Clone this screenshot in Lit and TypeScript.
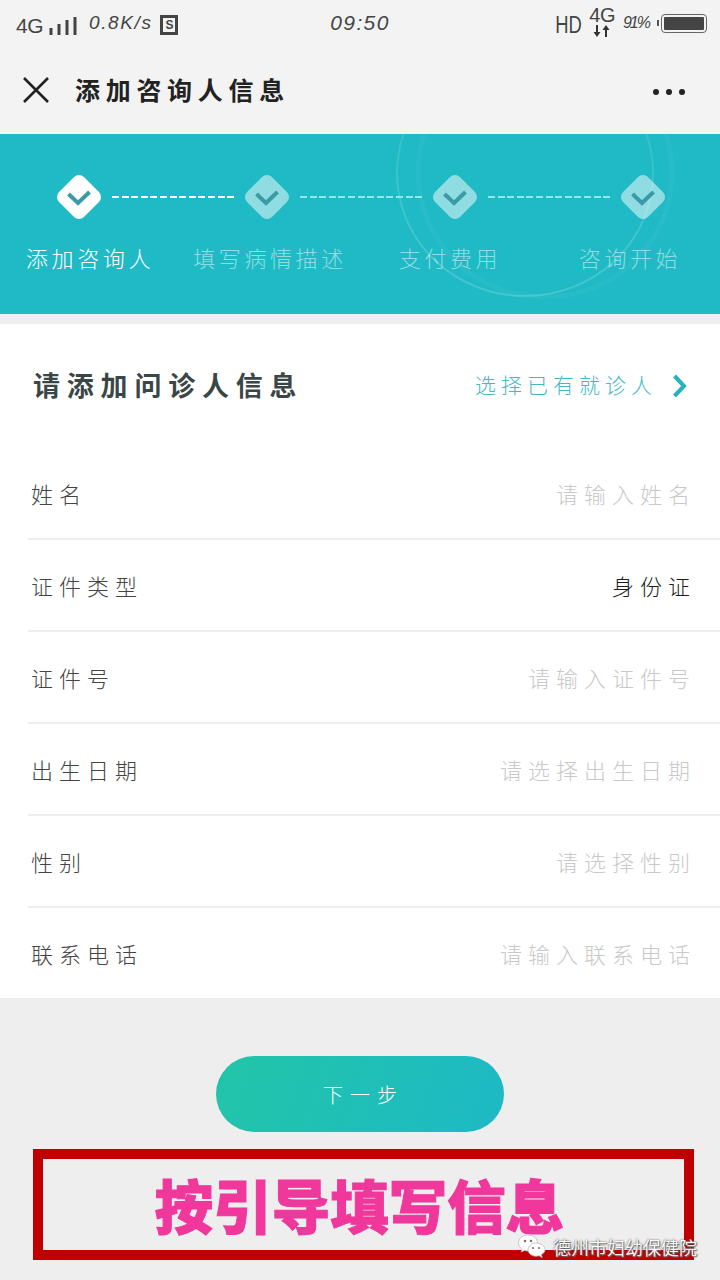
// app.ts
// Add-consultee form screen: status bar, step banner, form rows and the next button

import { LitElement, html, css, svg } from 'lit';
import { customElement } from 'lit/decorators.js';

const STEPS = ['添加咨询人', '填写病情描述', '支付费用', '咨询开始'];

const ROWS = [
  { label: '姓名', value: '请输入姓名', filled: false },
  { label: '证件类型', value: '身份证', filled: true },
  { label: '证件号', value: '请输入证件号', filled: false },
  { label: '出生日期', value: '请选择出生日期', filled: false },
  { label: '性别', value: '请选择性别', filled: false },
  { label: '联系电话', value: '请输入联系电话', filled: false },
];

const diamond = (active: boolean) => svg`
  <svg class="diamond" width="44" height="44" viewBox="0 0 44 44">
    <path
      d="M22 7L37 22L22 37L7 22Z"
      fill="#ffffff"
      stroke="#ffffff"
      stroke-width="14"
      stroke-linejoin="round"
      opacity=${active ? 1 : 0.5}
    ></path>
    <path d="M11.5 19L21 28L32.5 17" fill="none" stroke="#3a9ba6" stroke-width="4"></path>
  </svg>
`;

@customElement('app-root')
export class AppRoot extends LitElement {
  static styles = css`
    :host {
      display: block;
      width: 720px;
      height: 1280px;
      overflow: hidden;
      position: relative;
      background: #eeeeef;
      font-family: 'Noto Sans CJK SC', 'Noto Sans', sans-serif;
    }

    .top {
      height: 134px;
      background: #f3f3f3;
    }

    /* status bar */
    .status {
      height: 46px;
      display: grid;
      grid-template-columns: 1fr auto 1fr;
      align-items: center;
      color: #444;
      font-family: 'Liberation Sans', sans-serif;
    }

    .status-left,
    .status-right {
      display: flex;
      align-items: center;
    }

    .status-left {
      padding-left: 16px;
    }

    .status-right {
      justify-content: flex-end;
      padding-right: 13px;
    }

    .net {
      font-size: 21px;
      margin-top: 6px;
      letter-spacing: -0.5px;
    }

    .speed {
      font-size: 19px;
      font-style: italic;
      letter-spacing: 1.6px;
      margin: 0 8px 0 12px;
    }

    .sim {
      width: 18px;
      height: 20px;
      box-sizing: border-box;
      border: 3px solid #444;
      font-size: 12px;
      line-height: 15px;
      text-align: center;
      font-weight: 700;
      margin-top: 3px;
    }

    .time {
      font-size: 21px;
      font-style: italic;
      letter-spacing: 1.4px;
    }

    .hd {
      font-size: 23px;
      line-height: 26px;
      margin: 3px -3px 0 -3px;
      transform: scaleX(0.8);
    }

    .net-stack {
      display: flex;
      flex-direction: column;
      align-items: center;
      margin: -3px 8px 0 7px;
      font-size: 20px;
      line-height: 17px;
      letter-spacing: -0.5px;
    }

    .net-stack svg {
      display: block;
      margin-top: 1px;
    }

    .pct {
      font-size: 16px;
      font-style: italic;
      letter-spacing: -2px;
      margin-right: 8px;
      margin-bottom: 1px;
    }

    .nub {
      width: 2px;
      height: 6px;
      margin-right: 2px;
      background: #555;
    }

    .battery {
      width: 46px;
      height: 19px;
      box-sizing: border-box;
      border: 1.5px solid #666;
      border-radius: 4px;
      padding: 2px;
      margin-top: 1px;
    }

    .battery div {
      height: 100%;
      background: #444;
      border-radius: 1px;
    }

    /* nav bar */
    .nav {
      height: 88px;
      display: flex;
      align-items: center;
      padding: 0 35px 0 23px;
      color: #222;
    }

    .nav-title {
      flex: 1;
      margin: 0 0 3px 26px;
      font-size: 25px;
      font-weight: 700;
      letter-spacing: 5.7px;
    }

    .dots {
      display: flex;
      gap: 7px;
      margin-top: 3px;
    }

    .dots i {
      width: 6px;
      height: 6px;
      border-radius: 50%;
      background: #222;
    }

    /* step banner */
    .banner {
      height: 180px;
      position: relative;
      overflow: hidden;
      background: #1fbac5;
    }

    .rings {
      position: absolute;
      left: 0;
      top: 0;
    }

    .track {
      position: relative;
      display: flex;
      align-items: center;
      padding: 41px 0 0 57px;
    }

    .diamond {
      display: block;
      flex: none;
    }

    .dash {
      width: 123px;
      height: 2px;
      margin: 0 10px 0 11px;
      background: repeating-linear-gradient(90deg, #8ce9ee 0 7px, transparent 7px 9.6px);
    }

    .dash.first {
      background: repeating-linear-gradient(90deg, #ffffff 0 7px, transparent 7px 9.6px);
    }

    .labels {
      position: relative;
      display: grid;
      grid-template-columns: repeat(4, 180px);
      margin-top: 23px;
      text-align: center;
      font-size: 22px;
      font-weight: 300;
      letter-spacing: 3.6px;
      line-height: 30px;
      color: rgba(255, 255, 255, 0.5);
    }

    .labels .active {
      color: #fff;
    }

    /* form */
    .form {
      margin-top: 10px;
      background: #fff;
    }

    .form-head {
      height: 124px;
      display: flex;
      align-items: center;
      justify-content: space-between;
      padding: 0 33px;
    }

    .form-title {
      margin-bottom: 4px;
      font-size: 27px;
      font-weight: 700;
      letter-spacing: 6.8px;
      color: #3b4747;
    }

    .pick {
      display: flex;
      align-items: center;
      color: #41b9c1;
      font-size: 21px;
      font-weight: 300;
      letter-spacing: 5px;
    }

    .pick span {
      margin-bottom: 4px;
    }

    .pick svg {
      margin-left: 15px;
    }

    .row {
      height: 92px;
      box-sizing: border-box;
      margin-left: 28px;
      padding: 0 24px 0 3px;
      display: flex;
      align-items: center;
      justify-content: space-between;
      border-bottom: 2px solid #eeeeee;
      font-size: 22px;
      font-weight: 300;
      letter-spacing: 6px;
      color: #444;
    }

    .row:last-child {
      height: 90px;
      border-bottom: none;
    }

    .value {
      color: #c9c9c9;
    }

    .value.filled {
      color: #1c1c1c;
    }

    /* footer */
    .next {
      width: 288px;
      height: 76px;
      margin: 58px auto 0;
      border-radius: 38px;
      display: flex;
      align-items: center;
      justify-content: center;
      background: linear-gradient(110deg, #22c5a8, #1eb9c6);
      color: #fff;
      font-size: 20px;
      font-weight: 300;
      letter-spacing: 7px;
      padding-left: 7px;
      box-sizing: border-box;
    }

    .guide {
      width: 661px;
      height: 111px;
      box-sizing: border-box;
      margin: 17px 0 0 33px;
      border: 10px solid #c00000;
      display: flex;
      align-items: center;
      justify-content: center;
      padding-right: 8px;
      color: #f0379b;
      font-size: 58.5px;
      font-weight: 900;
      line-height: 1;
      -webkit-text-stroke: 1px #f0379b;
    }

    /* account watermark sits over the guide box */
    .mark {
      position: absolute;
      left: 518px;
      top: 1233px;
      display: flex;
      align-items: center;
      gap: 7px;
      color: #f8f8f8;
      font-size: 18px;
      line-height: 28px;
      text-shadow: 0 0 2px #444, 1px 1px 1px #777;
      white-space: nowrap;
    }
  `;

  private renderStatus() {
    return html`
      <div class="status">
        <div class="status-left">
          <span class="net">4G</span>
          <svg width="28" height="20" viewBox="0 0 28 20" style="margin:6px 0 0 6px">
            <path d="M2 19V12M10 19V8M18 19V4M26 19V1" stroke="#444" stroke-width="3"></path>
          </svg>
          <span class="speed">0.8K/s</span>
          <span class="sim">S</span>
        </div>
        <span class="time">09:50</span>
        <div class="status-right">
          <span class="hd">HD</span>
          <div class="net-stack">
            <span>4G</span>
            <svg width="18" height="12" viewBox="0 0 18 12">
              <path d="M4 0V8M13 12V4" stroke="#333" stroke-width="2"></path>
              <path d="M0.5 7H7.5L4 12ZM9.5 5H16.5L13 0Z" fill="#333"></path>
            </svg>
          </div>
          <span class="pct">91%</span>
          <div class="nub"></div>
          <div class="battery"><div></div></div>
        </div>
      </div>
    `;
  }

  private renderBanner() {
    return html`
      <div class="banner">
        <svg class="rings" width="720" height="180" viewBox="0 0 720 180" fill="none">
          <defs>
            <linearGradient id="ringFade" x1="0" y1="0" x2="0" y2="1">
              <stop offset="0" stop-color="#fff" stop-opacity="0.08"></stop>
              <stop offset="1" stop-color="#fff" stop-opacity="0.17"></stop>
            </linearGradient>
          </defs>
          <ellipse cx="525" cy="39" rx="128" ry="123" stroke="url(#ringFade)" stroke-width="2"></ellipse>
          <ellipse cx="545" cy="39" rx="127" ry="124" stroke="#fff" stroke-opacity="0.04" stroke-width="5"></ellipse>
        </svg>
        <div class="track">
          ${STEPS.map(
            (_, i) => html`
              ${diamond(i === 0)}
              ${i < STEPS.length - 1 ? html`<div class="dash ${i === 0 ? 'first' : ''}"></div>` : ''}
            `
          )}
        </div>
        <div class="labels">
          ${STEPS.map((s, i) => html`<span class=${i === 0 ? 'active' : ''}>${s}</span>`)}
        </div>
      </div>
    `;
  }

  render() {
    return html`
      <div class="top">
        ${this.renderStatus()}
        <div class="nav">
          <svg width="26" height="26" viewBox="0 0 26 26">
            <path d="M1 1L25 25M25 1L1 25" stroke="#222" stroke-width="2.6"></path>
          </svg>
          <span class="nav-title">添加咨询人信息</span>
          <div class="dots"><i></i><i></i><i></i></div>
        </div>
      </div>
      ${this.renderBanner()}
      <div class="form">
        <div class="form-head">
          <span class="form-title">请添加问诊人信息</span>
          <div class="pick">
            <span>选择已有就诊人</span>
            <svg width="15" height="24" viewBox="0 0 15 24">
              <path d="M2.5 2L12 12L2.5 22" fill="none" stroke="#27b3bd" stroke-width="4"></path>
            </svg>
          </div>
        </div>
        ${ROWS.map(
          (r) => html`
            <div class="row">
              <span>${r.label}</span>
              <span class="value ${r.filled ? 'filled' : ''}">${r.value}</span>
            </div>
          `
        )}
      </div>
      <div class="next">下一步</div>
      <div class="guide">按引导填写信息</div>
      <div class="mark">
        <svg width="28" height="28" viewBox="0 0 28 28">
          <path d="M10 2C4.5 2 0.5 5.6 0.5 10C0.5 12.6 2 14.8 4 16.2L3.2 19L6.4 17.4C7.6 17.8 8.8 18 10 18C15.5 18 19.5 14.4 19.5 10C19.5 5.6 15.5 2 10 2Z" fill="#fff" stroke="#bbb" stroke-width="0.8"></path>
          <path d="M18 10C13.5 10 10 13 10 16.6C10 20.2 13.5 23.2 18 23.2C19 23.2 20 23 21 22.7L24.2 24.6L23.4 21.6C25.8 20.4 27 18.6 27 16.6C27 13 22.5 10 18 10Z" fill="#fff" stroke="#bbb" stroke-width="0.8"></path>
          <circle cx="7" cy="8" r="1.3" fill="#777"></circle>
          <circle cx="13" cy="8" r="1.3" fill="#777"></circle>
          <circle cx="15" cy="15" r="1.1" fill="#777"></circle>
          <circle cx="21" cy="15" r="1.1" fill="#777"></circle>
        </svg>
        <span>德州市妇幼保健院</span>
      </div>
    `;
  }
}
